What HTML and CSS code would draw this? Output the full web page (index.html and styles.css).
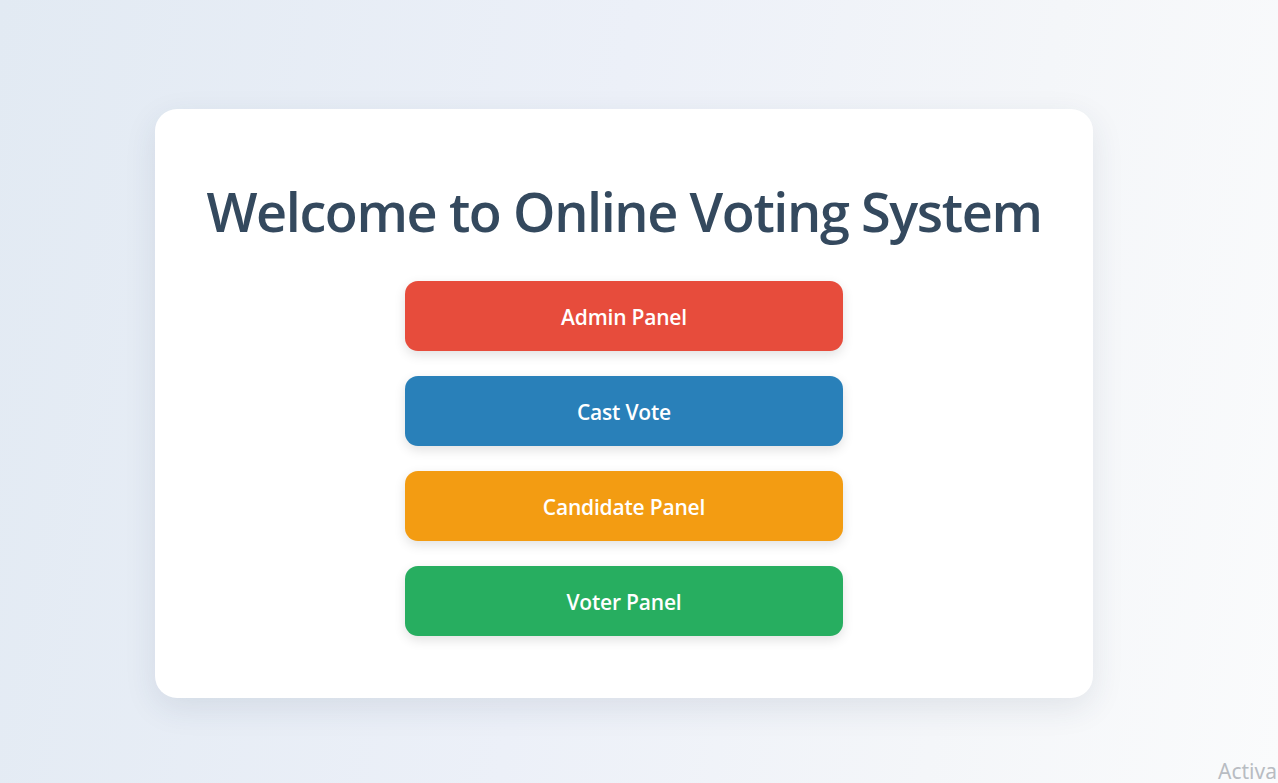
FILE: index.html
```html
<!DOCTYPE html>
<html lang="en">
<head>
<meta charset="utf-8">
<title>Online Voting System</title>
<link rel="stylesheet" href="styles.css">
</head>
<body>
  <main class="page">
    <section class="card">
      <h1 class="title">Welcome to Online Voting System</h1>
      <nav class="actions">
        <a class="btn btn-admin" href="#">Admin Panel</a>
        <a class="btn btn-vote" href="#">Cast Vote</a>
        <a class="btn btn-candidate" href="#">Candidate Panel</a>
        <a class="btn btn-voter" href="#">Voter Panel</a>
      </nav>
    </section>
  </main>
  <div class="watermark">Activa</div>
</body>
</html>
```
FILE: styles.css
```css
* { box-sizing: border-box; }
html, body {
  margin: 0;
  height: 100%;
  overflow: hidden;
}
body {
  font-family: "Open Sans", "Noto Sans", "Liberation Sans", sans-serif;
  background: linear-gradient(100deg, #e2eaf3 0%, #ecf0f8 45%, #f4f6f9 75%, #fafbfc 100%);
}
.page {
  display: flex;
  justify-content: center;
  padding-top: 109px;
  padding-right: 30px;
}
.card {
  width: 938px;
  height: 589px;
  background: #ffffff;
  border-radius: 22px;
  box-shadow: 0 10px 32px rgba(40, 60, 90, 0.10);
  padding: 64px 20px 0;
  display: flex;
  flex-direction: column;
  align-items: center;
}
.title {
  margin: 0 0 32px;
  font-size: 54px;
  font-weight: 600;
  line-height: 76px;
  color: #34495e;
  letter-spacing: -1.4px;
  white-space: nowrap;
}
.actions {
  display: flex;
  flex-direction: column;
  gap: 25px;
}
.btn {
  display: flex;
  align-items: center;
  justify-content: center;
  width: 438px;
  height: 70px;
  padding-top: 2px;
  border-radius: 13px;
  color: #ffffff;
  text-decoration: none;
  font-size: 21px;
  font-weight: 600;
  letter-spacing: -0.2px;
  box-shadow: 0 4px 12px rgba(0, 0, 0, 0.12);
}
.btn-admin { background: #e74c3c; }
.btn-vote { background: #2980b9; }
.btn-candidate { background: #f39c12; }
.btn-voter { background: #27ae60; }
.watermark {
  position: absolute;
  left: 1218px;
  top: 757px;
  font-size: 21px;
  color: #b8bcc2;
  white-space: nowrap;
  font-family: "Noto Sans", "Open Sans", sans-serif;
}
```
